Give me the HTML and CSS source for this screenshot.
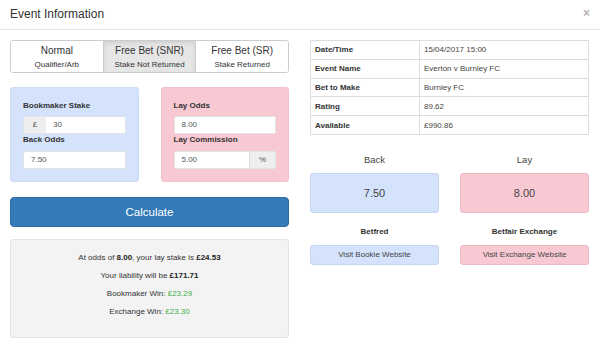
FILE: index.html
```html
<!DOCTYPE html>
<html>
<head>
<meta charset="utf-8">
<link rel="stylesheet" href="styles.css">
</head>
<body>
<div class="modal">
  <div class="modal-header">
    <span class="title">Event Information</span>
    <span class="close">×</span>
  </div>
  <div class="modal-body">
    <div class="col">
      <div class="toggle">
        <div class="tbtn"><div class="t1">Normal</div><div class="t2">Qualifier/Arb</div></div>
        <div class="tbtn active"><div class="t1">Free Bet (SNR)</div><div class="t2">Stake Not Returned</div></div>
        <div class="tbtn"><div class="t1">Free Bet (SR)</div><div class="t2">Stake Returned</div></div>
      </div>
      <div class="boxes">
        <div class="box back">
          <div class="label">Bookmaker Stake</div>
          <div class="igroup"><span class="addon">£</span><span class="input">30</span></div>
          <div class="label second">Back Odds</div>
          <div class="igroup"><span class="input">7.50</span></div>
        </div>
        <div class="box lay">
          <div class="label">Lay Odds</div>
          <div class="igroup"><span class="input">8.00</span></div>
          <div class="label second">Lay Commission</div>
          <div class="igroup"><span class="input">5.00</span><span class="addon addon-r">%</span></div>
        </div>
      </div>
      <div class="calc">Calculate</div>
      <div class="result">
        <div class="line">At odds of <b>8.00</b>, your lay stake is <b>£24.53</b></div>
        <div class="line">Your liability will be <b>£171.71</b></div>
        <div class="line">Bookmaker Win: <span class="green">£23.29</span></div>
        <div class="line">Exchange Win: <span class="green">£23.30</span></div>
      </div>
    </div>
    <div class="col">
      <table class="info">
        <tr><th>Date/Time</th><td>15/04/2017 15:00</td></tr>
        <tr><th>Event Name</th><td>Everton v Burnley FC</td></tr>
        <tr><th>Bet to Make</th><td>Burnley FC</td></tr>
        <tr><th>Rating</th><td>89.62</td></tr>
        <tr><th>Available</th><td>£990.86</td></tr>
      </table>
      <div class="pair">
        <div class="side">
          <div class="heading">Back</div>
          <div class="odds back">7.50</div>
          <div class="name">Betfred</div>
          <div class="visit back">Visit Bookie Website</div>
        </div>
        <div class="side">
          <div class="heading">Lay</div>
          <div class="odds lay">8.00</div>
          <div class="name">Betfair Exchange</div>
          <div class="visit lay">Visit Exchange Website</div>
        </div>
      </div>
    </div>
  </div>
</div>
</body>
</html>
```
FILE: styles.css
```css
* { box-sizing: border-box; }
html, body { margin: 0; padding: 0; background: #fff; }
body {
  font-family: "Liberation Sans", Arial, sans-serif;
  color: #333;
  width: 600px;
  height: 361px;
  overflow: hidden;
}
.modal-header {
  height: 30px;
  border-bottom: 1px solid #e5e5e5;
  display: flex;
  align-items: center;
  justify-content: space-between;
  padding: 0 10px;
}
.title { font-size: 12px; line-height: 29px; color: #333; }
.close { font-size: 12px; color: #b5b5b5; font-weight: bold; line-height: 12px; margin-top: -4px; }
.modal-body {
  display: grid;
  grid-template-columns: 279px 279px;
  column-gap: 21px;
  padding: 10px;
}
.toggle {
  display: flex;
  height: 33px;
  border: 1px solid #ccc;
  border-radius: 3px;
  overflow: hidden;
}
.tbtn {
  flex: 1;
  text-align: center;
  padding-top: 4px;
  color: #333;
  background: #fff;
}
.tbtn + .tbtn { border-left: 1px solid #ccc; }
.tbtn.active { background: #e6e6e6; box-shadow: inset 0 2px 4px rgba(0,0,0,.1); }
.t1 { font-size: 10px; line-height: 12px; }
.t2 { font-size: 8px; line-height: 11px; margin-top: 2px; }
.boxes {
  display: grid;
  grid-template-columns: 1fr 1fr;
  column-gap: 22px;
  margin-top: 14px;
}
.box {
  height: 95px;
  padding: 13px;
  border-radius: 3px;
}
.box.back { background: #d4e3fb; border: 1px solid #cddcf3; }
.box.lay { background: #f9c9d3; border: 1px solid #f1c1cb; }
.box { padding: 12px; }
.label { font-size: 8px; font-weight: bold; line-height: 11px; color: #333; margin-bottom: 5px; }
.label.second { margin-bottom: 6px; }
.igroup {
  display: flex;
  height: 18px;
  background: #fff;
  border: 1px solid #e4e4e4;
  border-radius: 2px;
  overflow: hidden;
}
.addon {
  width: 22px;
  background: #eee;
  color: #555;
  font-size: 8px;
  line-height: 16px;
  text-align: center;
  flex: none;
}
.addon-r { width: 26px; border-left: 1px solid #ddd; }
.input {
  flex: 1;
  font-size: 8px;
  line-height: 16px;
  color: #555;
  padding-left: 7px;
}
.calc {
  margin-top: 15px;
  height: 30px;
  background: #337ab7;
  border: 1px solid #2e6da4;
  border-radius: 4px;
  color: #fff;
  font-size: 11.5px;
  line-height: 28px;
  text-align: center;
}
.result {
  margin-top: 12px;
  height: 99px;
  background: #f3f3f3;
  border: 1px solid #e3e3e3;
  border-radius: 3px;
  padding-top: 9px;
  text-align: center;
}
.line { font-size: 8px; line-height: 18px; color: #333; }
.line b { color: #222; }
.green { color: #3fae49; }
.info {
  width: 279px;
  border-collapse: collapse;
  font-size: 8px;
}
.info th, .info td {
  border: 1px solid #ddd;
  height: 18.8px;
  padding: 0 4px;
  text-align: left;
  vertical-align: middle;
}
.info th { width: 109px; font-weight: bold; color: #333; }
.info td { color: #444; }
.pair {
  display: grid;
  grid-template-columns: 129px 129px;
  column-gap: 21px;
}
.heading {
  margin-top: 18px;
  font-size: 9.5px;
  line-height: 14px;
  text-align: center;
  color: #444;
}
.odds {
  margin-top: 6px;
  height: 40px;
  border-radius: 3px;
  font-size: 11px;
  line-height: 38px;
  text-align: center;
}
.back.odds, .back.visit { background: #d4e3fb; border: 1px solid #c6d6ef; color: #444; }
.lay.odds, .lay.visit { background: #f9c9d3; border: 1px solid #ecbcc6; color: #444; }
.name {
  margin-top: 13px;
  font-size: 8px;
  font-weight: bold;
  line-height: 12px;
  text-align: center;
  color: #333;
}
.visit {
  margin-top: 7px;
  height: 20px;
  border-radius: 3px;
  font-size: 8px;
  line-height: 18px;
  text-align: center;
}
```
